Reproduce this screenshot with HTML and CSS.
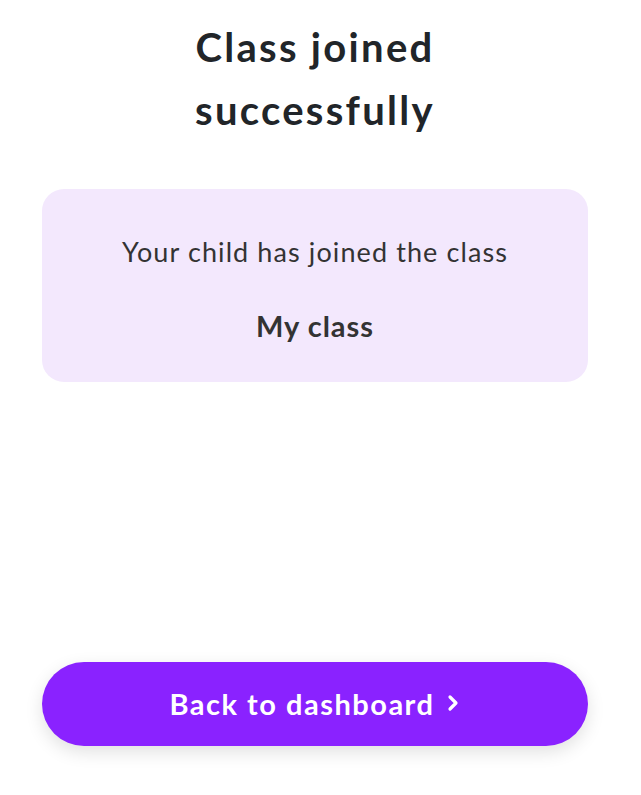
FILE: index.html
```html
<!DOCTYPE html>
<html>
<head>
<meta charset="utf-8">
<link rel="stylesheet" href="styles.css">
</head>
<body>
<div class="page">
  <h1 class="title">Class joined<br>successfully</h1>
  <div class="card">
    <p class="card-text">Your child has joined the class</p>
    <p class="card-name">My class</p>
  </div>
  <button class="btn">Back to dashboard
    <svg class="chev" width="14" height="20" viewBox="0 0 14 20"><path d="M4 4 L10 10 L4 16" fill="none" stroke="#fff" stroke-width="3.2" stroke-linecap="round" stroke-linejoin="round"/></svg>
  </button>
</div>
</body>
</html>
```
FILE: styles.css
```css
html, body { margin: 0; padding: 0; background: #fff; }
body { font-family: "Lato", "Noto Sans", sans-serif; }
.page {
  box-sizing: border-box;
  height: 795px;
  padding: 16px 53px 49px 42px;
  display: flex;
  flex-direction: column;
  align-items: stretch;
}
.title {
  margin: 0;
  text-align: center;
  font-size: 40px;
  line-height: 63px;
  font-weight: 700;
  color: #212529;
  letter-spacing: 2.3px;
}
.card {
  margin-top: 47px;
  background: #f3e8fd;
  border-radius: 22px;
  height: 193px;
  box-sizing: border-box;
  padding-top: 44px;
  text-align: center;
}
.card-text {
  margin: 0;
  font-size: 27px;
  line-height: 38px;
  color: #333;
  letter-spacing: 1.1px;
}
.card-name {
  margin: 36px 0 0;
  font-size: 29px;
  line-height: 38px;
  font-weight: 700;
  color: #333;
  letter-spacing: 1px;
}
.btn {
  margin-top: auto;
  height: 84px;
  border: none;
  border-radius: 42px;
  background: #8a22ff;
  color: #fff;
  font-family: inherit;
  font-size: 29px;
  font-weight: 700;
  letter-spacing: 1.5px;
  display: flex;
  align-items: center;
  justify-content: center;
  gap: 12px;
  padding-bottom: 3px;
  box-shadow: 0 6px 18px rgba(0,0,0,0.12);
}
.chev { display: block; }
```
